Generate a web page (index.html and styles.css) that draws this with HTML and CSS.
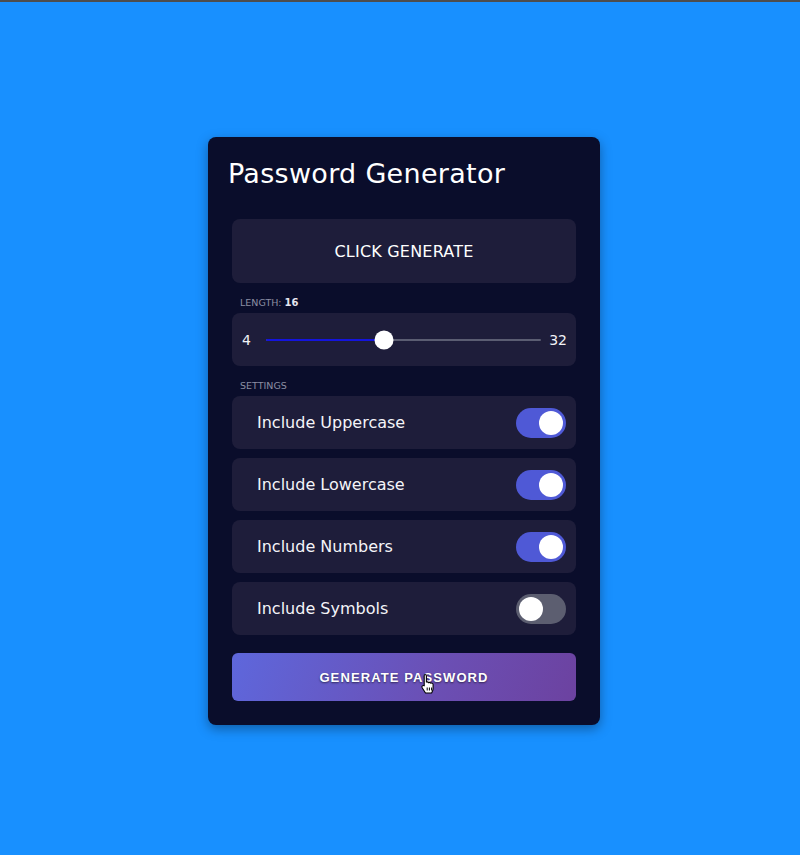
FILE: index.html
```html
<!DOCTYPE html>
<html lang="en">
<head>
<meta charset="utf-8">
<title>Password Generator</title>
<link rel="stylesheet" href="styles.css">
</head>
<body>
<div class="card">
  <h2 class="title">Password Generator</h2>
  <div class="result">CLICK GENERATE</div>
  <div class="label">LENGTH: <span class="label-value">16</span></div>
  <div class="box slider-box">
    <span class="range-end">4</span>
    <div class="track">
      <div class="track-fill" style="width:42.86%"></div>
      <div class="thumb" style="left:42.86%"></div>
    </div>
    <span class="range-end">32</span>
  </div>
  <div class="label">SETTINGS</div>
  <div class="settings">
    <div class="box setting"><span>Include Uppercase</span><span class="toggle on"><span class="knob"></span></span></div>
    <div class="box setting"><span>Include Lowercase</span><span class="toggle on"><span class="knob"></span></span></div>
    <div class="box setting"><span>Include Numbers</span><span class="toggle on"><span class="knob"></span></span></div>
    <div class="box setting"><span>Include Symbols</span><span class="toggle"><span class="knob"></span></span></div>
  </div>
  <button class="generate">GENERATE PASSWORD
    <svg class="cursor" width="16" height="22" viewBox="0 0 16 22"><path d="M5 1.5c.8 0 1.4.6 1.4 1.4V9l.4-.1c.8-.2 1.5.2 1.7.9.5-.4 1.3-.4 1.8 0 .3.1.4.3.5.5.5-.3 1.2-.3 1.7.1.4.3.6.8.6 1.3v3.8c0 1.2-.3 2.3-.9 3.3l-.6 1.2H5.5L2.3 15c-.5-.6-.6-1.5 0-2.1.5-.5 1.300-.5 1.9-.1V2.9c0-.8.3-1.4.8-1.4z" fill="#fff" stroke="#000" stroke-width="1.1" stroke-linejoin="round"/><path d="M7.2 14.5v3M9.4 14.5v3M11.6 14.5v3" stroke="#000" stroke-width="1"/></svg>
  </button>
</div>
</body>
</html>
```
FILE: styles.css
```css
html, body {
  margin: 0;
  padding: 0;
}
body {
  background: #1890ff;
  border-top: 2px solid #4d4d4d;
  height: 853px;
  display: flex;
  justify-content: center;
  align-items: center;
  font-family: "DejaVu Sans", "Open Sans", sans-serif;
  color: #fff;
}
.card {
  box-sizing: border-box;
  width: 392px;
  height: 588px;
  margin: 5px 0 0 8px;
  padding: 20px 24px 24px;
  background: #0a0d2b;
  border-radius: 8px;
  box-shadow: 0 4px 12px rgba(0, 0, 0, 0.35);
  display: flex;
  flex-direction: column;
}
.title {
  margin: 0 0 28px -4px;
  font-size: 27px;
  line-height: 34px;
  font-weight: 400;
  letter-spacing: 0.3px;
}
.result {
  height: 64px;
  background: #1e1d3a;
  border-radius: 8px;
  display: flex;
  align-items: center;
  justify-content: center;
  font-size: 16px;
  letter-spacing: 0.2px;
}
.label {
  margin: 14px 0 4px 8px;
  font-size: 9.5px;
  line-height: 12px;
  color: #8b8da3;
}
.label-value {
  color: #e6e6ee;
  font-weight: 600;
  font-size: 10px;
}
.box {
  height: 53px;
  box-sizing: border-box;
  background: #1e1d3a;
  border-radius: 8px;
  display: flex;
  align-items: center;
}
.slider-box {
  padding: 0 9px 0 10px;
  font-size: 14px;
}
.range-end {
  color: #f2f2f6;
}
.track {
  position: relative;
  flex: 1;
  height: 2px;
  margin: 0 8px 0 15px;
  background: #5b5d72;
  border-radius: 1px;
}
.track-fill {
  height: 100%;
  background: #1414dc;
  border-radius: 1px;
}
.thumb {
  position: absolute;
  top: 50%;
  width: 19px;
  height: 19px;
  border-radius: 50%;
  background: #fff;
  transform: translate(-50%, -50%);
}
.settings {
  display: flex;
  flex-direction: column;
  gap: 9px;
}
.setting {
  justify-content: space-between;
  padding: 0 10px 0 25px;
  font-size: 16px;
  color: #f4f4f8;
}
.toggle {
  box-sizing: border-box;
  width: 50px;
  height: 30px;
  border-radius: 15px;
  background: #5c5e70;
  padding: 3px;
  display: flex;
  justify-content: flex-start;
  align-items: center;
}
.toggle.on {
  background: #4f59d6;
  justify-content: flex-end;
}
.knob {
  width: 24px;
  height: 24px;
  border-radius: 50%;
  background: #fff;
}
.generate {
  position: relative;
  margin-top: 18px;
  height: 48px;
  border: none;
  border-radius: 6px;
  background: linear-gradient(110deg, #5e67dc 0%, #6b4fb4 60%, #6c42a0 100%);
  color: #fff;
  font-family: "Liberation Sans", Arial, sans-serif;
  font-weight: 700;
  font-size: 13px;
  letter-spacing: 1.1px;
  text-shadow: 0 1px 2px rgba(0, 0, 0, 0.55);
}
.cursor {
  position: absolute;
  left: 188px;
  top: 20px;
}
```
